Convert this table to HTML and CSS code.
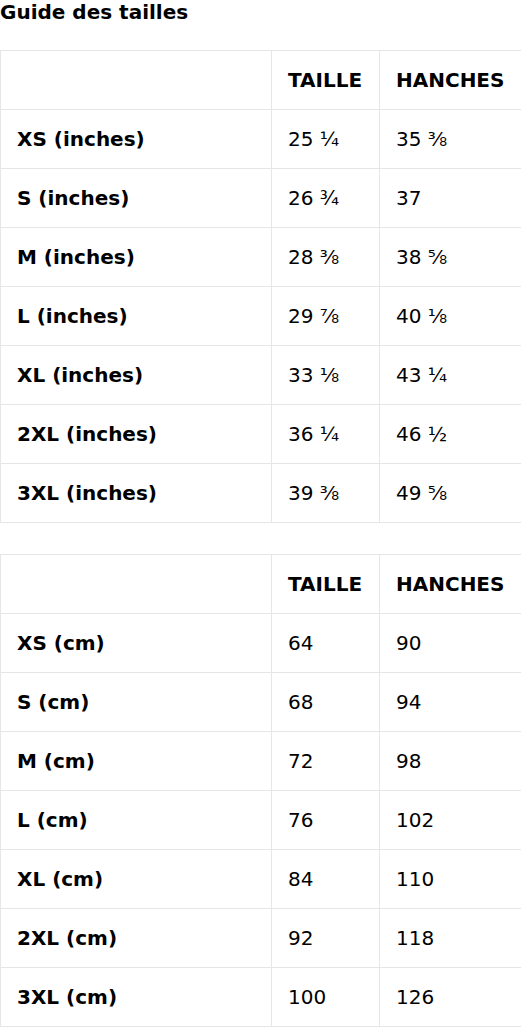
FILE: index.html
```html
<!DOCTYPE html>
<html lang="fr">
<head>
<meta charset="utf-8">
<title>Guide des tailles</title>
<link rel="stylesheet" href="styles.css">
</head>
<body>
<h2 class="title">Guide des tailles</h2>
<table class="size-table">
  <colgroup><col class="c1"><col class="c2"><col class="c3"></colgroup>
  <thead>
    <tr><th></th><th>TAILLE</th><th>HANCHES</th></tr>
  </thead>
  <tbody>
    <tr><th>XS (inches)</th><td>25 ¼</td><td>35 ⅜</td></tr>
    <tr><th>S (inches)</th><td>26 ¾</td><td>37</td></tr>
    <tr><th>M (inches)</th><td>28 ⅜</td><td>38 ⅝</td></tr>
    <tr><th>L (inches)</th><td>29 ⅞</td><td>40 ⅛</td></tr>
    <tr><th>XL (inches)</th><td>33 ⅛</td><td>43 ¼</td></tr>
    <tr><th>2XL (inches)</th><td>36 ¼</td><td>46 ½</td></tr>
    <tr><th>3XL (inches)</th><td>39 ⅜</td><td>49 ⅝</td></tr>
  </tbody>
</table>
<table class="size-table second">
  <colgroup><col class="c1"><col class="c2"><col class="c3"></colgroup>
  <thead>
    <tr><th></th><th>TAILLE</th><th>HANCHES</th></tr>
  </thead>
  <tbody>
    <tr><th>XS (cm)</th><td>64</td><td>90</td></tr>
    <tr><th>S (cm)</th><td>68</td><td>94</td></tr>
    <tr><th>M (cm)</th><td>72</td><td>98</td></tr>
    <tr><th>L (cm)</th><td>76</td><td>102</td></tr>
    <tr><th>XL (cm)</th><td>84</td><td>110</td></tr>
    <tr><th>2XL (cm)</th><td>92</td><td>118</td></tr>
    <tr><th>3XL (cm)</th><td>100</td><td>126</td></tr>
  </tbody>
</table>
</body>
</html>
```
FILE: styles.css
```css
html, body {
  margin: 0;
  padding: 0;
  background: #fff;
}
body {
  font-family: "DejaVu Sans", sans-serif;
  color: #000;
}
.title {
  margin: 0;
  font-size: 20px;
  line-height: 24px;
  font-weight: bold;
}
.size-table {
  margin-top: 26px;
  width: 521px;
  border-collapse: collapse;
  table-layout: fixed;
  font-size: 20px;
}
.size-table.second {
  margin-top: 31px;
}
.c1 { width: 271px; }
.c2 { width: 108px; }
.c3 { width: 142px; }
.size-table th,
.size-table td {
  border: 1px solid #e6e6e6;
  height: 59px;
  padding: 0 16px;
  text-align: left;
  vertical-align: middle;
  box-sizing: border-box;
  line-height: 24px;
}
.size-table th { font-weight: bold; }
.size-table td { font-weight: normal; }
```
